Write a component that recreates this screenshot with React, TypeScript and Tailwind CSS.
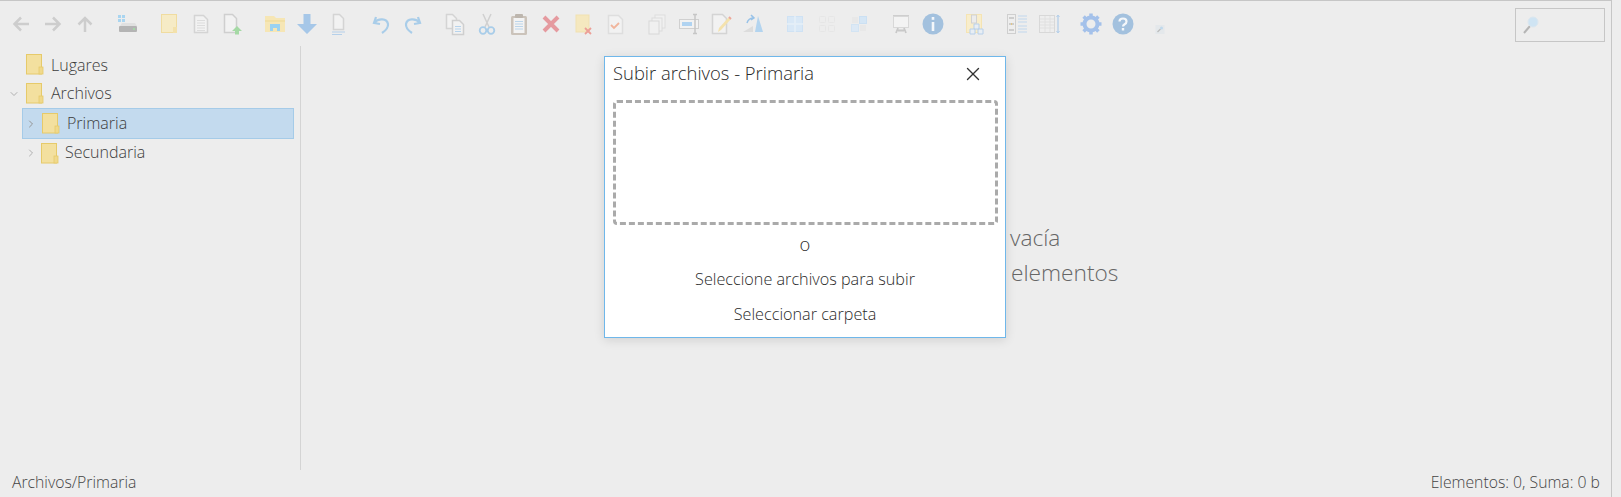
import React from "react";
import { X, ChevronRight, ChevronDown } from "lucide-react";

const S = ({ children }: { children: React.ReactNode }) => (
  <svg width="24" height="24" viewBox="0 0 24 24" fill="none">{children}</svg>
);

const Doc = ({ x = 5, y = 3, w = 14, h = 18, stroke = "#d4d4d4", fill = "#f2f2f2" }) => (
  <path d={`M${x + .5} ${y + .5}h${w - 5}l4 4v${h - 5}h-${w - 1}z`} fill={fill} stroke={stroke} strokeWidth="1.5" />
);
const Lines = ({ x = 8, y = 8, w = 8, n = 5, c = "#dcdcdc" }) => (
  <>{Array.from({ length: n }).map((_, i) => <path key={i} d={`M${x} ${y + i * 2.5 + .5}h${w}`} stroke={c} />)}</>
);

const icons: Record<string, React.ReactNode> = {
  back: <path d="M20 12H6M12 5.500L5.500 12l6.500 6.500" stroke="#cdcdcd" strokeWidth="2.500" />,
  fwd: <path d="M4 12h14M12 5.500l6.500 6.500-6.500 6.500" stroke="#cdcdcd" strokeWidth="2.500" />,
  up: <path d="M12 20V6M5.500 12.500L12 6l6.500 6.500" stroke="#cdcdcd" strokeWidth="2.500" />,
  drive: <>
    <path d="M3 3h3v3H3zM7 3h3v3H7zM3 7h3v3H3zM7 7h3v3H7z" fill="#a9d5f0" />
    <path d="M5 14l2-3h13l2 3z" fill="#e0e0e0" />
    <rect x="4" y="14" width="18" height="6" rx="1" fill="#b4b4b4" />
    <rect x="18" y="16" width="2" height="2" fill="#a5d6a7" />
  </>,
  folderNew: <>
    <rect x="4.500" y="2.500" width="15" height="18" fill="#f6ebc6" stroke="#f0dca0" />
    <rect x="16" y="15" width="4" height="6" fill="#f3e1ab" />
  </>,
  doc: <><Doc /><Lines x={8} y={8} w={8} n={5} /></>,
  docUp: <>
    <Doc x={3} y={2} w={13} h={19} stroke="#cfcfcf" />
    <path d="M16 14l5 5h-3v3.500h-4V19h-3z" fill="#a5d9a5" />
  </>,
  explorer: <>
    <path d="M2 4h9l2 2h9v14H2z" fill="#f6e6b5" />
    <path d="M2 9h20" stroke="#eed993" />
    <path d="M7 12h10v7h-3v-3h-4v3H7z" fill="#9ad2f1" />
  </>,
  down: <path d="M8.500 2h7v10h6.500L12 22 2 12h6.500z" fill="#a6c7e8" />,
  docLines: <>
    <Doc x={6} y={2} w={11} h={16} stroke="#d4d4d4" />
    <path d="M5 20h13M5 22.500h10" stroke="#b5d0ea" strokeWidth="1.200" />
  </>,
  undo: <path d="M7 5L5 11l6 1M5.500 10.500C9 6 18 6 19 12c.5 4-3 7-6 9" stroke="#a9cde9" strokeWidth="2.200" />,
  redo: <path d="M17 5l2 6-6 1M18.500 10.500C15 6 6 6 5 12c-.5 4 3 7 6 9" stroke="#a9cde9" strokeWidth="2.200" />,
  copy: <>
    <Doc x={3} y={2} w={11} h={15} stroke="#d4d4d4" />
    <Doc x={9} y={8} w={12} h={15} stroke="#cfcfcf" />
    <Lines x={12} y={14} w={6} n={3} c="#b6d3ec" />
  </>,
  cut: <>
    <path d="M8 2l6 13M16 2l-6 13" stroke="#d0d0d0" strokeWidth="1.500" />
    <circle cx="8" cy="18.500" r="3.300" stroke="#a9cde9" strokeWidth="1.800" />
    <circle cx="16" cy="18.500" r="3.300" stroke="#a9cde9" strokeWidth="1.800" />
  </>,
  paste: <>
    <rect x="4" y="4" width="16" height="19" rx="1.500" fill="#cbc3ba" />
    <rect x="6.500" y="6" width="11" height="15" fill="#f3f3f3" />
    <rect x="8" y="2" width="8" height="4" rx="1" fill="#bdb6ae" />
    <Lines x={8} y={9} w={8} n={4} c="#bcd5ea" />
  </>,
  del: <path d="M5 5l14 14M19 5L5 19" stroke="#e59a9f" strokeWidth="4" />,
  rm: <>
    <rect x="5" y="3" width="13" height="17" fill="#f5e8bf" stroke="#f1e1b1" />
    <path d="M14 16l6 6M20 16l-6 6" stroke="#ec9f97" strokeWidth="1.800" />
  </>,
  check: <>
    <Doc x={5} y={3} w={15} h={19} stroke="#dedede" />
    <path d="M8 13l3 3 5-5" stroke="#f1b59c" strokeWidth="1.800" />
  </>,
  dup: <>
    <rect x="10" y="3" width="10" height="13" fill="#f0f0f0" stroke="#dedede" />
    <rect x="7" y="6" width="10" height="13" fill="#f0f0f0" stroke="#dcdcdc" />
    <rect x="4" y="9" width="10" height="13" fill="#f0f0f0" stroke="#d8d8d8" />
  </>,
  rename: <>
    <rect x="2.500" y="7.500" width="19" height="9" fill="#f2f2f2" stroke="#d0d0d0" />
    <rect x="5" y="10" width="10" height="4" fill="#b0d3f1" />
    <path d="M16 2.500h4M18 2.500v19M16 21.500h4" stroke="#c6c6c6" strokeWidth="1.500" />
  </>,
  edit: <>
    <Doc x={3} y={2} w={15} h={20} stroke="#d4d4d4" />
    <path d="M9 20l1-4 10-11 2 2-10 11z" fill="#f4e2ad" />
    <path d="M20 5l2 2" stroke="#eda69b" strokeWidth="1.800" />
  </>,
  resize: <>
    <path d="M2 20l10-6v6z" fill="#dcdcdc" />
    <path d="M17 4l5 16h-8z" fill="#b3d4ef" />
    <path d="M6 11c1-4 4-5 7-5M10 3l3 3-3 2" stroke="#98c2e8" strokeWidth="1.500" />
  </>,
  grid1: <>
    <rect x="4.500" y="4.500" width="15" height="15" fill="#d9e8f6" stroke="#cfe2f4" />
    <path d="M12 4v16M4 12h16" stroke="#e6eff7" strokeWidth="1.500" />
  </>,
  grid2: <>
    <rect x="4.500" y="4.500" width="6" height="6" rx="1" stroke="#e6e6e6" />
    <rect x="13.500" y="4.500" width="6" height="6" rx="1" stroke="#e6e6e6" />
    <rect x="4.500" y="13.500" width="6" height="6" rx="1" stroke="#e6e6e6" />
    <rect x="13.500" y="13.500" width="6" height="6" rx="1" stroke="#e6e6e6" />
  </>,
  grid3: <>
    <rect x="4.500" y="12.500" width="7" height="7" fill="#dde9f5" stroke="#d3e4f3" />
    <rect x="12.500" y="4.500" width="7" height="7" fill="#d5e6f5" stroke="#cbe0f3" />
    <rect x="13" y="13" width="6" height="6" fill="#e8e8e8" />
    <rect x="5" y="5" width="6" height="6" fill="#e8e8e8" />
  </>,
  slide: <>
    <path d="M4 3h16v1.500H4z" fill="#cecece" />
    <rect x="4.500" y="4.500" width="15" height="11" fill="#f3f3f3" stroke="#d8d8d8" />
    <path d="M9 16l-2 5M15 16l2 5M9 18.500h6" stroke="#c8c8c8" strokeWidth="1.800" />
  </>,
  info: <>
    <circle cx="12" cy="12" r="10.500" fill="#a3c1de" />
    <rect x="10.700" y="5" width="2.600" height="2.800" fill="#f4f7fa" />
    <rect x="10.700" y="10" width="2.600" height="9" fill="#f4f7fa" />
  </>,
  arch: <>
    <rect x="3.500" y="2.500" width="15" height="18" fill="#f8edcb" stroke="#f5e4b3" />
    <rect x="8.500" y="3" width="5" height="8" fill="#ececec" stroke="#d2d2d2" />
    <path d="M11 12h5v5h-5zM7 17h5v5H7zM15 17h5v5h-5z" fill="#e8eef4" stroke="#b8d0ea" />
  </>,
  tree: <>
    <rect x="2.500" y="2.500" width="8" height="19" fill="#eeeeee" stroke="#cfcfcf" />
    <path d="M4 6h5M4 12h5M4 18h5" stroke="#c2c2c2" strokeWidth="1.500" />
    <path d="M6 12h1" stroke="#e8c36f" strokeWidth="1.500" />
    <path d="M13 4h9M13 7h9M13 10h9M13 14h9M13 17h9M13 20h9" stroke="#c2d8ee" strokeWidth="1.200" />
  </>,
  table: <>
    <rect x="2.500" y="3.500" width="15" height="17" fill="#eeeeee" stroke="#d8d8d8" />
    <path d="M3 7h14M3 10h14M3 13h14M3 16h14M8 4v16M13 4v16" stroke="#e0e0e0" />
    <path d="M21 3v18" stroke="#b4cee9" strokeWidth="1.300" />
    <path d="M19.500 5L21 3l1.500 2M19.500 19l1.500 2 1.500-2" stroke="#b4cee9" />
  </>,
  gear: <>
    <circle cx="12" cy="12" r="6.500" stroke="#a4c1ea" strokeWidth="4" />
    <path d="M12 1.500v4M12 18.500v4M1.500 12h4M18.500 12h4M4.600 4.600l2.800 2.800M16.600 16.600l2.800 2.800M19.400 4.600l-2.800 2.800M7.400 16.600l-2.800 2.800" stroke="#a4c1ea" strokeWidth="3.500" />
  </>,
  help: <>
    <circle cx="12" cy="12" r="10.500" fill="#a3c1de" />
    <path d="M8.500 9.500C8.500 5.500 15.500 5.500 15.500 9.500c0 3-3.500 2.500-3.500 5" stroke="#f4f7fa" strokeWidth="2.200" />
    <rect x="10.800" y="16" width="2.400" height="2.500" fill="#f4f7fa" />
  </>,
  small: <>
    <rect x="7.500" y="13" width="9" height="9" fill="#e4e8eb" />
    <path d="M9.500 20l3-3" stroke="#bcbcbc" strokeWidth="1.200" />
    <circle cx="13.500" cy="16" r="1.500" fill="#c0d9ec" />
  </>,
};

const groups = [
  ["back", "fwd", "up"],
  ["drive"],
  ["folderNew", "doc", "docUp"],
  ["explorer", "down", "docLines"],
  ["undo", "redo"],
  ["copy", "cut", "paste", "del", "rm", "check"],
  ["dup", "rename", "edit", "resize"],
  ["grid1", "grid2", "grid3"],
  ["slide", "info"],
  ["arch"],
  ["tree", "table"],
  ["gear", "help"],
  ["small"],
];

const Folder = () => (
  <svg width="18" height="21" viewBox="0 0 18 21" className="shrink-0">
    <rect x=".5" y=".5" width="15" height="19.500" fill="#f3e09f" stroke="#e6ca6a" />
    <rect x="13" y="13" width="4" height="7" fill="#f0d98c" stroke="#e6ca6a" strokeWidth=".8" />
  </svg>
);

const Row = ({ children, className = "" }: { children: React.ReactNode; className?: string }) => (
  <div className={`flex items-center ${className}`}>{children}</div>
);

export default function App() {
  return (
    <div className="relative w-[1621px] h-[497px] overflow-hidden bg-[#ededed] text-[#3c3c3c] font-['Open_Sans',sans-serif] font-light">
      <div className="w-[1612px] h-full flex flex-col border-t border-r border-[#c6c6c6]">
        {/* toolbar */}
        <header className="h-[45px] flex items-start shrink-0 relative">
          <div className="flex gap-[10px] pl-[5px] pt-[11px] blur-[0.4px]">
            {groups.map((g, i) => (
              <div key={i} className={i === groups.length - 1 ? "flex -ml-[5px]" : "flex"}>
                {g.map((n) => (
                  <span key={n} className="w-8 h-6 flex items-center justify-center">
                    <S>{icons[n]}</S>
                  </span>
                ))}
              </div>
            ))}
          </div>
          <div className="absolute right-[6px] top-[7px] w-[90px] h-[34px] border border-[#c6c6c6] flex items-center pl-[6px]">
            <svg width="18" height="20" viewBox="0 0 18 20" className="blur-[0.3px]">
              <path d="M2 18l6-7" stroke="#b5b5b5" strokeWidth="2" />
              <circle cx="11" cy="7" r="5" fill="#cfe4f3" stroke="#dbe6ee" />
            </svg>
          </div>
        </header>

        {/* body */}
        <div className="flex-1 flex min-h-0">
          <aside className="w-[301px] shrink-0 border-r border-[#d4d4d4] pt-[4px] text-[16px]">
            <Row className="h-[29px] pl-[26px] gap-[7px]"><Folder /><span>Lugares</span></Row>
            <Row className="h-[29px] pl-[8px]">
              <ChevronDown size={12} strokeWidth={2} className="text-[#b0b0b0]" />
              <span className="ml-[6px]"><Folder /></span>
              <span className="ml-[7px] pb-[2px]">Archivos</span>
            </Row>
            <Row className="ml-[22px] w-[272px] h-[31px] bg-[#c3daee] border border-[#a5cbe8] pl-[2px]">
              <ChevronRight size={12} strokeWidth={2} className="text-[#959595]" />
              <span className="ml-[5px]"><Folder /></span>
              <span className="ml-[7px] pb-[2px]">Primaria</span>
            </Row>
            <Row className="h-[28px] pl-[25px]">
              <ChevronRight size={12} strokeWidth={2} className="text-[#b0b0b0]" />
              <span className="ml-[4px]"><Folder /></span>
              <span className="ml-[6px] pb-[2px]">Secundaria</span>
            </Row>
          </aside>
          <main className="flex-1 flex flex-col items-start pl-[709px] pt-[174px] text-[22.7px] leading-[35px] text-[#666666]">
            <div>vacía</div>
            <div className="ml-px">elementos</div>
          </main>
        </div>

        {/* status */}
        <footer className="h-[27px] shrink-0 flex items-center justify-between pl-[12px] pr-[11px] text-[15.75px] text-[#444] pb-[1px]">
          <span>Archivos/Primaria</span>
          <span>Elementos: 0, Suma: 0 b</span>
        </footer>
      </div>

      {/* dialog */}
      <div className="absolute left-[604px] top-[56px] w-[402px] h-[282px] bg-white border border-[#6fb7ea] shadow-[0_2px_10px_rgba(0,0,0,0.12)] px-[8px] text-[#2a2a2a]">
        <div className="h-[33px] flex items-center justify-between">
          <span className="text-[18.4px] pb-[2px]">Subir archivos - Primaria</span>
          <X size={22} strokeWidth={1.500} className="mr-[13px] text-[#333]" />
        </div>
        <div className="mt-[10px] h-[125px] w-[385px] border-[3px] border-dashed border-[#aaaaaa] rounded-[4px]" />
        <div className="flex flex-col items-center text-[16.2px] mt-[2px]">
          <span className="h-[35px] flex items-center text-[18.4px] pb-[2px]">o</span>
          <span className="h-[35px] flex items-center">Seleccione archivos para subir</span>
          <span className="h-[35px] flex items-center">Seleccionar carpeta</span>
        </div>
      </div>
    </div>
  );
}
